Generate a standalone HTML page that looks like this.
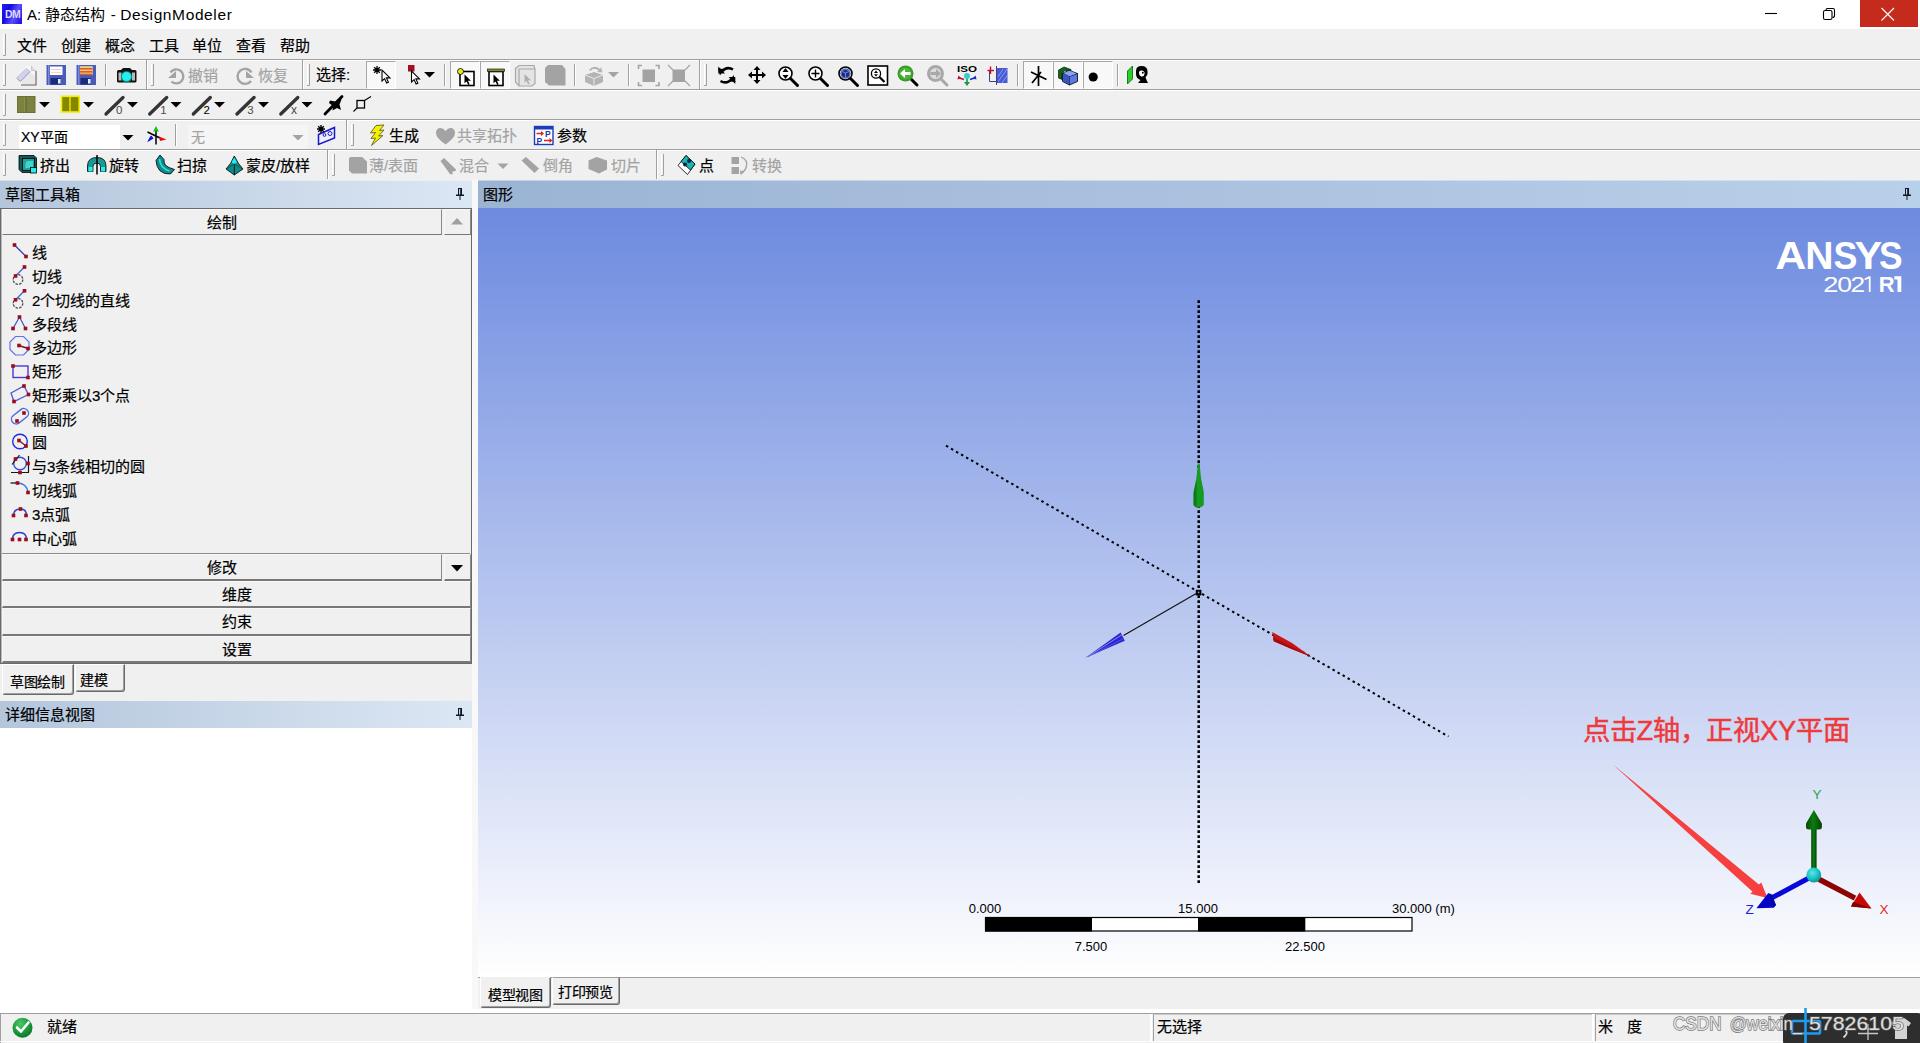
<!DOCTYPE html>
<html lang="zh-CN">
<head>
<meta charset="utf-8">
<title>A: 静态结构 - DesignModeler</title>
<style>
*{box-sizing:border-box;margin:0;padding:0}
html,body{width:1920px;height:1043px;overflow:hidden;background:#f0f0f0;font-family:"Liberation Sans",sans-serif;color:#000}
body{position:relative;font-size:15px;-webkit-text-stroke:.200px}
.a{position:absolute}
svg{position:absolute;overflow:visible}
/* title bar */
#title{left:0;top:0;width:1920px;height:29px;background:#fff}
#title .txt{-webkit-text-stroke:0;left:27px;top:5px;font-size:16px;line-height:20px;white-space:nowrap}
#close{left:1860px;top:0;width:58px;height:27px;background:#c42b1c}
/* menu + toolbars */
#bars{left:0;top:29px;width:1920px;height:152px;background:#f0f0f0}
.hl{left:0;width:1920px;height:2px;border-top:1px solid #a0a0a0;border-bottom:1px solid #fff}
.menu{top:37px;font-size:15px;line-height:18px;white-space:nowrap}
.grip{width:3px;border-left:1px solid #fff;border-right:1px solid #a0a0a0}
.vsep{width:2px;border-left:1px solid #a0a0a0;border-right:1px solid #fff}
.tb{font-size:15px;line-height:18px;white-space:nowrap}
.dis{color:#a3a3a3}
.pr{background:#f8f8f8;border-top:1px solid #a8a8a8;border-left:1px solid #a8a8a8;border-right:1px solid #fff;border-bottom:1px solid #fff}
/* left panel */
.phead{height:27px;background:linear-gradient(90deg,#b3c6dc,#dce7f4);font-size:15px;line-height:27px;padding-left:5px;white-space:nowrap}
.sec{left:2px;height:27px;background:#f0f0f0;border-top:1px solid #f8f8f8;border-left:1px solid #f8f8f8;border-right:1px solid #8a8a8a;border-bottom:2px solid #787878;text-align:center;font-size:15px;line-height:25.500px}
.li{left:32px;font-size:15px;line-height:18px;white-space:nowrap;transform:translateY(-.5px)}
.tab{background:#f0f0f0;font-size:14px;line-height:14px;white-space:nowrap;border-top:1px solid #fff;border-left:1px solid #fff;border-right:1px solid #6a6a6a;border-bottom:1px solid #6a6a6a;box-shadow:inset -1px -1px 0 #a0a0a0;border-radius:0 0 3px 3px}
/* viewport */
#view{left:478px;top:208px;width:1442px;height:769px;background:linear-gradient(180deg,#6c8adf 0%,#ffffff 100%)}
.sc{-webkit-text-stroke:0;font-size:13px;line-height:14px;white-space:nowrap}
/* status */
#status{left:0;top:1011px;width:1920px;height:32px;background:#f0f0f0}
</style>
</head>
<body>

<!-- ===== TITLE BAR ===== -->
<div id="title" class="a">
  <div class="a" style="left:2px;top:4px;width:20px;height:20px;background:linear-gradient(115deg,#2a1eea 0%,#140ae0 32%,#5c50fc 62%,#3426ec 82%,#1a0ee0 100%)"></div>
  <div class="a" style="left:3px;top:7px;width:19px;font-size:10.500px;line-height:14px;font-weight:bold;color:#dcdcff;letter-spacing:-.600px;-webkit-text-stroke:0;text-align:center">DM</div>
  <div class="a txt" style="font-size:15px">A: 静态结构<span style="display:inline-block;width:5.500px"></span>-<span style="display:inline-block;width:4.300px"></span><span style="font-size:15.500px;letter-spacing:.620px">DesignModeler</span></div>
  <div id="close" class="a"></div>
  <svg class="a" style="left:1740px;top:0" width="180" height="30" viewBox="1740 0 180 30">
    <path d="M1765 13.500H1777" stroke="#000" stroke-width="1.100"/>
    <rect x="1823.500" y="10.500" width="8.500" height="9" rx="1.600" fill="none" stroke="#000" stroke-width="1.100"/>
    <path d="M1826 10.500V10Q1826 8.500 1827.500 8.500H1833Q1834.500 8.500 1834.500 10V15.500Q1834.500 17.500 1832.500 17.500" fill="none" stroke="#000" stroke-width="1.100"/>
    <path d="M1881.500 8L1894 20.500M1894 8L1881.500 20.500" stroke="#fff" stroke-width="1.100"/>
  </svg>
</div>

<!-- ===== MENU + TOOLBARS ===== -->
<div id="bars" class="a"></div>
<div class="a menu" style="left:17px">文件</div>
<div class="a menu" style="left:61px">创建</div>
<div class="a menu" style="left:105px">概念</div>
<div class="a menu" style="left:149px">工具</div>
<div class="a menu" style="left:192px">单位</div>
<div class="a menu" style="left:236px">查看</div>
<div class="a menu" style="left:280px">帮助</div>
<div class="a hl" style="top:59px"></div>
<div class="a hl" style="top:89px"></div>
<div class="a hl" style="top:119px"></div>
<div class="a hl" style="top:149px"></div>

<!-- toolbar texts -->
<div class="a tb dis" style="left:188px;top:67px">撤销</div>
<div class="a tb dis" style="left:258px;top:67px">恢复</div>
<div class="a tb" style="left:316px;top:66px">选择:</div>
<div class="a" style="left:19px;top:125px;width:101px;height:24px;background:#fff"></div>
<div class="a tb" style="left:21px;top:128px;font-size:14px">XY平面</div>
<div class="a" style="left:188px;top:125px;width:120px;height:24px;background:#f5f5f5"></div>
<div class="a tb dis" style="left:191px;top:128px;font-size:14px">无</div>
<div class="a tb" style="left:389px;top:127px">生成</div>
<div class="a tb dis" style="left:457px;top:127px">共享拓扑</div>
<div class="a tb" style="left:557px;top:127px">参数</div>
<div class="a tb" style="left:40px;top:157px">挤出</div>
<div class="a tb" style="left:109px;top:157px">旋转</div>
<div class="a tb" style="left:177px;top:157px">扫掠</div>
<div class="a tb" style="left:246px;top:157px">蒙皮/放样</div>
<div class="a tb dis" style="left:369px;top:157px">薄/表面</div>
<div class="a tb dis" style="left:459px;top:157px">混合</div>
<div class="a tb dis" style="left:543px;top:157px">倒角</div>
<div class="a tb dis" style="left:611px;top:157px">切片</div>
<div class="a tb" style="left:699px;top:157px">点</div>
<div class="a tb dis" style="left:752px;top:157px">转换</div>

<!-- pressed (checked) toolbar buttons -->
<div class="a pr" style="left:366px;top:61px;width:30px;height:28px"></div>
<div class="a pr" style="left:450px;top:61px;width:30px;height:28px"></div>
<div class="a pr" style="left:480px;top:61px;width:30px;height:28px"></div>
<div class="a pr" style="left:1023px;top:61px;width:30px;height:28px"></div>
<div class="a pr" style="left:1053px;top:61px;width:30px;height:28px"></div>
<div class="a pr" style="left:1083px;top:61px;width:30px;height:28px"></div>

<!-- ICONS_SVG -->
<svg class="a" style="left:0;top:0" width="1920" height="181" viewBox="0 0 1920 181">
<defs>
  <g id="grip"><path d="M3.5 0V21.5" stroke="#fff" fill="none"/><path d="M5.5 0V21.5H3" stroke="#a0a0a0" fill="none"/></g>
  <g id="vs"><path d="M0.5 0V22" stroke="#a0a0a0"/><path d="M1.5 0V22" stroke="#fff"/></g>
  <g id="tend"><path d="M0.5 0V29" stroke="#a0a0a0"/><path d="M1.5 0V29" stroke="#fff"/></g>
  <path id="dd" d="M0 0H11L5.5 5.5Z"/>
  <g id="mag"><circle cx="8" cy="8" r="6.5" fill="#fff" stroke="#000" stroke-width="1.6"/><path d="M13 13L20 20" stroke="#000" stroke-width="3" stroke-linecap="round"/></g>
  <g id="cur"><path d="M0 0V11L2.6 8.6L4.6 13L6.4 12.2L4.4 7.9H8Z"/></g>
</defs>
<!-- grips -->
<use href="#grip" x="0" y="34"/>
<use href="#grip" x="0" y="64"/><use href="#grip" x="148" y="64"/><use href="#grip" x="304" y="64"/><use href="#grip" x="701" y="64"/>
<use href="#grip" x="0" y="94"/>
<use href="#grip" x="0" y="124"/><use href="#grip" x="348" y="124"/>
<use href="#grip" x="0" y="154"/><use href="#grip" x="329" y="154"/><use href="#grip" x="658" y="154"/>
<!-- toolbar ends -->
<use href="#tend" x="146" y="60"/><use href="#tend" x="302" y="60"/><use href="#tend" x="699" y="60"/>
<use href="#tend" x="346" y="120"/><use href="#tend" x="327" y="150"/><use href="#tend" x="656" y="150"/>
<!-- separators -->
<use href="#vs" x="105" y="64"/><use href="#vs" x="444" y="64"/><use href="#vs" x="574" y="64"/><use href="#vs" x="628" y="64"/><use href="#vs" x="1017" y="64"/><use href="#vs" x="1117" y="64"/>
<use href="#vs" x="175" y="124"/>

<!-- ROW 1 -->
<!-- new -->
<path d="M26 66H31.500L36 70.500V85H20.500V75Z" fill="#f6f6f6"/><path d="M31.500 66V70.500H36" fill="#dcdcdc" stroke="#b4b4b4" stroke-width=".6"/><path d="M21 85H36V71" stroke="#5c5c5c" stroke-width="1.100" fill="none"/><path d="M22 79L30 72L35 76V84H22Z" fill="#e2e2e2" opacity=".7"/>
<path d="M16.500 78L26.500 68.500L30 71.500L20.500 81.500Z" fill="#d2d2ee" stroke="#b0b0d4" stroke-width=".7"/><path d="M17.200 78.800L20.500 81.500L30 71.500" stroke="#a4a4c4" stroke-width="1" fill="none"/>
<!-- save -->
<g id="flop"><rect x="46.5" y="65" width="19.5" height="20" fill="#4a5cba"/><rect x="48" y="65" width="1.5" height="20" fill="#7c8ad8"/><rect x="50" y="66.5" width="12.5" height="8.5" fill="#fff"/><rect x="50.5" y="78" width="10.5" height="6.5" fill="#1c2c7c"/><rect x="58" y="79" width="2.6" height="4.6" fill="#e8ecff"/></g>
<use href="#flop" x="30"/><rect x="80" y="66.5" width="12.5" height="8.5" fill="#f4d060"/><rect x="80" y="68" width="12.5" height="1.6" fill="#e05a3a"/><rect x="80" y="71" width="12.5" height="1.6" fill="#e05a3a"/><rect x="80" y="73.6" width="12.5" height="1.4" fill="#e05a3a"/>
<rect x="51" y="69" width="10" height="1" fill="#f0c8c8"/><rect x="51" y="72" width="10" height="1" fill="#f0e0b0"/>
<!-- camera -->
<path d="M117 71.5Q117 70 118.5 70H121L123 68H130L132 70H135Q136.5 70 136.5 71.5V81Q136.5 82.5 135 82.5H118.5Q117 82.5 117 81Z" fill="#111"/>
<rect x="118.5" y="72.5" width="3" height="8" fill="#b8b8b8"/><rect x="132" y="72.5" width="3" height="8" fill="#b8b8b8"/>
<circle cx="126.5" cy="76.7" r="5.6" fill="#0a8a8a"/><circle cx="126.5" cy="76.5" r="4.6" fill="#22f0f0"/>
<!-- undo / redo (disabled) -->
<g fill="none" stroke="#a3a3a3" stroke-width="2.4"><path d="M170.5 72.5A7 7 0 1 1 171.5 81.5"/><path d="M251.5 72.5A7.5 7.5 0 1 0 251 81"/></g>
<path d="M168 78H176V71Z" fill="#a3a3a3"/><path d="M254 78H246V71Z" fill="#a3a3a3"/>
<!-- select: new selection (star + cursor) -->
<g stroke="#000" stroke-width="1.3"><path d="M373 70H381M377 66V74M374.2 67.2L379.8 72.8M379.8 67.2L374.2 72.8"/></g>
<use href="#cur" x="382" y="70" fill="#fff" stroke="#000" stroke-width="1.1"/>
<!-- select mode -->
<rect x="408" y="65" width="6.5" height="6.5" fill="#a01020"/>
<use href="#cur" x="411.5" y="71" fill="#fff" stroke="#000" stroke-width="1.1"/>
<use href="#dd" x="424" y="72"/>
<!-- point filter -->
<rect x="460" y="71.5" width="14" height="14" fill="#fff" stroke="#000" stroke-width="1.6"/><use href="#cur" transform="translate(464.500 74.500) scale(.8)"/><circle cx="460.5" cy="71.5" r="3" fill="#e8e820" stroke="#000" stroke-width=".8"/>
<!-- edge filter -->
<rect x="489" y="71.5" width="14" height="14" fill="#fff" stroke="#000" stroke-width="1.6"/><use href="#cur" transform="translate(493.500 74.500) scale(.8)"/><rect x="487.5" y="69" width="17" height="2.6" fill="#8a8a3a" stroke="#000" stroke-width=".6"/>
<!-- face filter (disabled) -->
<g stroke="#a8a8a8" fill="#e4e4e4" stroke-width="1.2"><path d="M515.5 68.5L519 65.5H534L535 69V83.5L532 86H519L515.5 82Z"/><path d="M519 69H535M519 69V86" fill="none"/></g><use href="#cur" transform="translate(524.500 74) scale(.8)" fill="#b0b0b0"/>
<!-- body filter (disabled) -->
<path d="M545 68L548 65H562L565.5 69V85.5H549L545 82Z" fill="#a3a3a3"/>
<!-- extend (disabled) -->
<g fill="#b4b4b4"><path d="M585 75L594 72L603 75V82L594 86L585 82Z"/><path d="M589 70Q594 64 600 69L601 67L602.5 72.5L597 72L598.5 70.5Q594 67 590.5 71Z"/></g><path d="M585 75L594 78.5L603 75M594 78.5V86" stroke="#e8e8e8" fill="none"/>
<use href="#dd" x="608" y="72" fill="#a3a3a3"/>
<!-- expand/shrink (disabled) -->
<g fill="#a3a3a3"><rect x="642.5" y="69.5" width="12.5" height="12.5"/><rect x="672.5" y="69.5" width="12.5" height="12.5"/></g>
<g stroke="#a3a3a3" stroke-width="1.6" fill="none"><path d="M638.5 69V65.5H642M655.5 65.5H659V69M659 82V85.5H655.5M642 85.5H638.5V82"/><path d="M668 65L673 70M690 65L685 70M690 86L685 81M668 86L673 81" stroke-width="1.2"/></g>
<!-- rotate -->
<g fill="none" stroke="#000" stroke-width="2.6"><path d="M721 72.5Q726.500 65.500 733 69.500"/><path d="M732.500 78Q727 85 720.500 81"/></g><path d="M718 68.500L724 69L720 75.500Z M735.500 82L729.500 81.500L733.500 75Z" fill="#000"/>
<path d="M718.300 66.500V73.500H725Z M735.300 84V77H728.600Z" fill="#000"/>
<!-- pan -->
<path d="M757 66L760.500 70H758V74H762V71.500L766 75L762 78.500V76H758V80H760.500L757 84L753.500 80H756V76H752V78.500L748 75L752 71.500V74H756V70H753.500Z" fill="#000"/>
<!-- zoom -->
<use href="#mag" x="777.500" y="65.500"/><path d="M785.500 68L788.500 72H782.500Z M785.500 79L788.500 75H782.500Z" fill="#000"/>
<!-- zoom + -->
<use href="#mag" x="807.500" y="65.500"/><path d="M811.500 73.500H819.500M815.500 69.500V77.500" stroke="#000" stroke-width="1.4"/>
<!-- zoom body -->
<use href="#mag" x="837.500" y="65.500"/><circle cx="845.500" cy="73.500" r="5.2" fill="#5a6ab0"/><path d="M842 71.500L845.500 70L849 71.500V76L845.500 77.500L842 76Z" fill="#1a2a8a"/><path d="M842 71.500L845.500 73L849 71.500M845.500 73V77.500" stroke="#9ab0ff" stroke-width=".7" fill="none"/>
<!-- box zoom -->
<rect x="868" y="66" width="19.500" height="19" fill="#fff" stroke="#000" stroke-width="1.6"/><circle cx="876" cy="73.500" r="4.600" fill="#fff" stroke="#000" stroke-width="1.300"/><path d="M879.500 77L884.500 82" stroke="#000" stroke-width="2.200"/><path d="M876 70.500L878 73H874ZM876 76.500L878 74.200H874Z"/>
<!-- prev view (green) -->
<g id="gm"><path d="M910 78L917 85" stroke="#000" stroke-width="3" stroke-linecap="round"/><circle cx="905.500" cy="73.500" r="8" fill="#3a9a2a"/><circle cx="905.500" cy="73.500" r="6" fill="#4cb43a"/><path d="M900 73.500L905 69V72H910.500V75H905V78Z" fill="#fff"/></g>
<!-- next view (disabled) -->
<path d="M940 78L947 85" stroke="#a8a8a8" stroke-width="3" stroke-linecap="round"/><circle cx="935.500" cy="73.500" r="7" fill="#dcdcdc" stroke="#a8a8a8" stroke-width="3"/><path d="M941 73.500L936 69V72H930.500V75H936V78Z" fill="#a8a8a8"/>
<!-- ISO -->
<text x="957" y="72" font-family="Liberation Sans, sans-serif" font-weight="bold" font-size="9.500" textLength="20" lengthAdjust="spacingAndGlyphs">ISO</text>
<path d="M967 76V84" stroke="#1a9a3a" stroke-width="1.600"/><path d="M964 82L967 86L970 82Z" fill="#1a9a3a"/><path d="M958 77.500L964 79.500" stroke="#c01030" stroke-width="1.600"/><path d="M957.500 79.500L958.500 75.500L961.500 78.500Z" fill="#c01030"/><path d="M976 77.500L970 79.500" stroke="#1030c0" stroke-width="1.600"/><path d="M976.500 79.500L975.500 75.500L972.500 78.500Z" fill="#1030c0"/><circle cx="967" cy="76" r="3" fill="#30d0d0"/>
<!-- section plane -->
<rect x="997" y="68" width="10.500" height="15" fill="#4a5ad0"/><path d="M998 82L1007 69M998 77L1003 69M1002 83L1007.500 75" stroke="#8a9aff" stroke-width="1"/><path d="M989.500 70V81.500H998M996.500 66V85" stroke="#404080" stroke-width="1" fill="none"/><path d="M987.500 70.500H994M990.500 66.500V74" stroke="#c01030" stroke-width="1.400"/>
<!-- display plane / axes -->
<path d="M1038.500 66V86M1031 72L1046.500 79.500M1032 83L1041 72" stroke="#000" stroke-width="1.700" fill="none"/>
<!-- model cubes -->
<path d="M1058.500 70L1064 67L1071 69.500V72L1065 70.500L1062 72.500V79.500L1058.500 78Z" fill="#0a6a1a" stroke="#000" stroke-width=".6"/>
<path d="M1062.500 73L1069.500 70.500L1077.500 73.500V81.500L1069.500 85L1062.500 81.500Z" fill="#5a7ae0" stroke="#000" stroke-width=".8"/><path d="M1062.500 73L1069.500 76.500L1077.500 73.500M1069.500 76.500V85" stroke="#000" stroke-width=".7" fill="none"/><path d="M1063 73.500L1069.500 76.800V84.500L1063 81.300Z" fill="#3a55c0"/><path d="M1063.500 73L1069.500 70.800L1076.500 73.500L1069.500 76.200Z" fill="#8aa4f4"/>
<!-- point display -->
<circle cx="1093.200" cy="77" r="4.600" fill="#000"/>
<!-- look at -->
<path d="M1127.500 71L1132.500 66V79L1127.500 84Z" fill="#2ad02a" stroke="#0a5a0a" stroke-width=".8"/>
<path d="M1136 71Q1136 66 1141.500 66Q1147.500 66 1147.500 71.500Q1148 75 1145.500 77L1146.500 80L1148 83H1138L1140.500 80Q1136 78.500 1136 74Z" fill="#000"/><path d="M1139 72.500Q1139 70 1142 70.500Q1145 71 1144.500 74Q1144 77 1141.500 76.500Q1139 76 1139 72.500Z" fill="#fff"/><circle cx="1142.800" cy="72.800" r="1" fill="#000"/>

<!-- ROW 2 -->
<rect x="17.500" y="96.500" width="17.500" height="16" fill="#7d8140" stroke="#6c7034" stroke-width="1"/><rect x="24.300" y="97" width="1.200" height="15" fill="#8e9252"/><rect x="25.500" y="97" width="1.200" height="15" fill="#666a2c"/>
<use href="#dd" x="39" y="102"/>
<rect x="61.500" y="96.300" width="17.700" height="15.700" fill="#868600" stroke="#f0f000" stroke-width="1.600"/><rect x="69.300" y="96.500" width="1.400" height="15.500" fill="#e8e800"/>
<use href="#dd" x="83" y="102"/>
<g id="ln"><path d="M106 114L123 97.500" stroke="#343434" stroke-width="3.300" stroke-linecap="round"/></g>
<use href="#ln" x="43.700"/><use href="#ln" x="87.300"/><use href="#ln" x="131"/><use href="#ln" x="174.800"/>
<g font-family="Liberation Sans, sans-serif" font-size="11.500" fill="#4a4a4a"><text x="116" y="113.600">0</text><text x="160.300" y="113.600">1</text><text x="203.600" y="113.600" fill="#000">2</text><text x="247.300" y="113.600">3</text><text x="291" y="113.600" font-size="12">x</text></g>
<use href="#dd" x="127" y="102"/><use href="#dd" x="170.500" y="102"/><use href="#dd" x="214" y="102"/><use href="#dd" x="258" y="102"/><use href="#dd" x="301.500" y="102"/>
<path d="M325 114L342 96.500" stroke="#000" stroke-width="2.800" stroke-linecap="round"/><path d="M330 100.500L335.500 101.500L340 98L341.500 99.500L339.500 104.500L341 110L337 108L332.500 110.500L333 106L329 103Z" fill="#000"/>
<rect x="357" y="100.500" width="7.500" height="7.500" fill="none" stroke="#000" stroke-width="1.300"/><path d="M353.500 111.500L357 108M364.500 100.500L371 96.500" stroke="#000" stroke-width="1.100"/>

<!-- ROW 3 -->
<use href="#dd" x="122.500" y="135"/>
<use href="#dd" x="292.500" y="135" fill="#a3a3a3"/>
<path d="M156 130V144.500M147.500 132L160 138" stroke="#000" stroke-width="1.500"/><path d="M156 126L158.800 131.500H153.200Z" fill="#10c010"/><path d="M153 137L147.500 141.800L150.500 136.200Z" fill="#1010e0"/><path d="M151 135.500L153.500 138.500L147.200 142.200Z" fill="#1010e0"/><path d="M159 136.500L166.500 139.500L160 141Z" fill="#e01010"/>
<path d="M318.500 134.500L334.500 127.500V138L318.500 144.500Z" fill="#eeeeff" stroke="#1818c8" stroke-width="1.500"/><circle cx="324.500" cy="135" r="1.400" fill="none" stroke="#1818c8"/><circle cx="330" cy="133.500" r="2" fill="none" stroke="#1818c8"/>
<g stroke="#000" stroke-width="1.400"><path d="M317 129H325M321 125V133M318.200 126.200L323.800 131.800M323.800 126.200L318.200 131.800"/></g>
<path d="M376 125.500L384 125L379.500 130.500L384 130L378.500 136L383 135.500L371.500 145.500L375.500 138L371 138.500L375.500 132.500L370.500 133Z" fill="#f8f000" stroke="#50500a" stroke-width=".8"/>
<path d="M445.500 131Q443 127.500 439.500 128Q436 129 436 133Q436 138 445.500 144.500Q455 138 455 133Q455 129 451.500 128Q448 127.500 445.500 131Z" fill="#a3a3a3"/>
<rect x="534.500" y="126.500" width="18.500" height="18" fill="#fff" stroke="#1c3cb8" stroke-width="1.400"/><rect x="534.500" y="126.500" width="18.500" height="3" fill="#1c3cb8"/>
<g font-family="Liberation Sans, sans-serif" font-weight="bold" font-size="8.500" fill="#1c3cb8"><text x="545" y="137">P</text><text x="536.500" y="143.800">P</text></g>
<path d="M536.500 133.500H542M544 140.500H550.500" stroke="#e02020" stroke-width="1.300"/><path d="M541 131L544 133.500L541 136ZM549.500 138L552.500 140.500L549.500 143Z" fill="#e02020"/>

<!-- ROW 4 -->
<path d="M19 155.500H34L36.500 158V168H31V172.500H22L19 169.500Z" fill="#0c5c5c" stroke="#000" stroke-width=".8"/><rect x="22.500" y="158.500" width="12" height="12" fill="#2a9c94" stroke="#000" stroke-width=".8"/><path d="M25.500 164Q25.500 161 28.500 161H33V168H25.500Z" fill="#38d8d0"/><rect x="30.500" y="167.500" width="6" height="5.500" fill="#20f0f0" stroke="#000" stroke-width=".8"/>
<path d="M87.500 171.500V166Q87.500 157.500 97 157.500Q106 157.500 106 166V171.500H100.500V166.500Q100.500 163 97 163Q93 163 93 166.500V171.500Z" fill="#1a9a94" stroke="#000" stroke-width=".8"/><rect x="88.500" y="167" width="4" height="4.500" fill="#20f0f0"/><rect x="101" y="167" width="4" height="4.500" fill="#20f0f0"/><path d="M97 155V174.500" stroke="#000" stroke-width="1.500"/>
<path d="M160 155L164 159.500Q163.500 165 169 167.500L174.500 169.500L170.500 174Q157 174.500 156 160.500Z" fill="#148a88" stroke="#000" stroke-width=".8"/><path d="M159.500 159Q160 168 169.500 171" stroke="#20e8e8" stroke-width="1.600" fill="none"/>
<path d="M234.300 156L238.500 163.500L243 169L234.300 175L226 169L230.500 163.500Z" fill="#148a88" stroke="#000" stroke-width=".8"/><path d="M234.300 157.500L237 162.500L234.300 164L231.500 162.500Z" fill="#20f0f0"/><path d="M234.300 164V175" stroke="#000" stroke-width=".8"/><path d="M226.500 169L234.300 164L242.500 169" stroke="#0a5050" stroke-width=".8" fill="none"/>
<g fill="#a3a3a3">
<path d="M349 159Q349 157 351 157H362L367 161.500V173.500H352L349 170.500Z"/>
<path d="M440.500 161L444 158L456 169.500L455.500 171L452.500 171.500V174.500L450 174Z"/>
<path d="M521.500 160.500L526 157L539 168.500L534.500 173Z"/>
<path d="M588.500 160.500L596.500 157L607 160.500V169.500L599 173.500L588.500 169Z"/>
<rect x="731.500" y="157" width="7.500" height="7"/><rect x="731.500" y="167" width="7.500" height="7"/>
</g>
<use href="#dd" x="497.500" y="163.500" fill="#a3a3a3"/>
<path d="M741 157Q748 160 746.500 166Q745.500 171 741.500 172.500" stroke="#a3a3a3" stroke-width="1.300" fill="none"/><path d="M740 170L744 172.500L740.500 175Z" fill="#a3a3a3"/>
<path d="M686 155.500L695 164L687.500 174.500L678 165.500Z" fill="#fff" stroke="#000" stroke-width=".8"/><path d="M686 155.500L695 164L690.500 170L681 161.500Z" fill="#18b8b0" stroke="#000" stroke-width=".8"/><circle cx="685" cy="164.500" r="1.700" fill="#102080" stroke="#000" stroke-width=".5"/><circle cx="689" cy="161" r="1.700" fill="#102080" stroke="#000" stroke-width=".5"/>
</svg>
<!-- ===== LEFT PANEL ===== -->
<div class="a" style="left:472px;top:180px;width:6px;height:831px;background:#f8f8f8"></div>
<div class="a phead" style="left:0;top:180px;width:472px;height:28px;line-height:29px;box-shadow:inset 0 1px 0 rgba(255,255,255,.45)">草图工具箱</div>
<div class="a" style="left:0;top:208px;width:472px;height:456px;background:#f0f0f0;border:1px solid #6a6a6a;box-shadow:inset 1px 0 0 #b8b8b8"></div>
<div class="a sec" style="top:209px;width:440px;height:26px;border-bottom:1px solid #787878">绘制</div>
<div class="a sec" style="top:209px;left:444px;width:27px;height:26px;border-bottom:1px solid #787878"></div>
<div class="a li" style="top:244px">线</div>
<div class="a li" style="top:268px">切线</div>
<div class="a li" style="top:292px">2个切线的直线</div>
<div class="a li" style="top:316px">多段线</div>
<div class="a li" style="top:339px">多边形</div>
<div class="a li" style="top:363px">矩形</div>
<div class="a li" style="top:387px">矩形乘以3个点</div>
<div class="a li" style="top:411px">椭圆形</div>
<div class="a li" style="top:434px">圆</div>
<div class="a li" style="top:458px">与3条线相切的圆</div>
<div class="a li" style="top:482px">切线弧</div>
<div class="a li" style="top:506px">3点弧</div>
<div class="a li" style="top:530px">中心弧</div>

<div class="a" style="left:2px;top:553px;width:468px;height:1px;background:#8c8c8c"></div>
<div class="a sec" style="top:554px;width:440px">修改</div>
<div class="a sec" style="top:554px;left:444px;width:27px"></div>
<div class="a sec" style="top:581px;width:469px">维度</div>
<div class="a sec" style="top:608px;width:469px;height:28px">约束</div>
<div class="a sec" style="top:636px;width:469px">设置</div>

<!-- bottom tabs -->
<div class="a tab" style="left:75px;top:664px;width:50px;height:28px;padding:8px 0 0 4px">建模</div>
<div class="a tab" style="left:2px;top:664px;width:72px;height:31px;padding:10px 0 0 7px;letter-spacing:-.300px">草图绘制</div>

<div class="a phead" style="left:0;top:701px;width:472px">详细信息视图</div>
<div class="a" style="left:0;top:728px;width:472px;height:283px;background:#fff"></div>

<svg class="a" style="left:0;top:181px" width="478" height="560" viewBox="0 181 478 560">
<defs><rect id="rs" x="-.3" y="-.3" width="3.600" height="3.600" fill="#9c0c1c"/>
<g id="pin"><path d="M2.500 0H6.500V6.500H8.500V8H5V12H4V8H0.500V6.500H2.500Z" fill="#101828"/><rect x="3.500" y="1" width="1.200" height="5.500" fill="#c8d4e4"/></g></defs>
<use href="#pin" x="455.500" y="188"/><use href="#pin" x="455.500" y="708"/>
<path d="M451 224.500H463L457 218Z" fill="#a0a0a0"/>
<path d="M451 565H463L457 571.500Z" fill="#000"/>
<!-- 线 -->
<path d="M14.500 245L26 256.500" stroke="#3c3cb4" stroke-width="1.300"/><use href="#rs" x="13" y="243.500"/><use href="#rs" x="24.500" y="255"/>
<!-- 切线 -->
<g id="tan"><circle cx="18" cy="279.500" r="4.800" fill="none" stroke="#505058" stroke-width="1.300" stroke-dasharray="2.500 1.200"/><path d="M15.500 276L24.500 267" stroke="#4a6ad8" stroke-width="1.400"/><use href="#rs" x="23" y="265.500"/><use href="#rs" x="14" y="274.500"/></g>
<use href="#tan" y="23.800"/>
<!-- 多段线 -->
<path d="M13 328.500L19.500 317L25.500 328.500" stroke="#3c5cd0" stroke-width="1.300" fill="none"/><use href="#rs" x="18" y="315.500"/><use href="#rs" x="11.500" y="327"/><use href="#rs" x="24" y="327"/>
<!-- 多边形 -->
<path d="M15.500 336.500H23.500L29 342V349.500L23.500 355H15.500L10 349.500V342Z" fill="none" stroke="#6272e4" stroke-width="1.200"/><path d="M19 345.500L28 348.500" stroke="#7a1020" stroke-width="1.400"/><use href="#rs" x="17.500" y="344"/><use href="#rs" x="26.500" y="347"/>
<!-- 矩形 -->
<rect x="13" y="366" width="15" height="11.500" fill="none" stroke="#4a3ad0" stroke-width="1.400"/><use href="#rs" x="11.500" y="364.500"/><use href="#rs" x="26.500" y="376"/>
<!-- 矩形3点 -->
<path d="M11 393L24 386L28.500 394.500L14 401.500Z" fill="none" stroke="#4a5ad8" stroke-width="1.300"/><use href="#rs" x="22.500" y="384.500"/><use href="#rs" x="27" y="393"/><use href="#rs" x="12.500" y="400"/>
<!-- 椭圆形 -->
<rect x="10.500" y="411.500" width="19" height="9.500" rx="4.750" fill="none" stroke="#4a6ae0" stroke-width="1.400" transform="rotate(-38 20 416.250)"/><use href="#rs" x="22.500" y="411.500"/><use href="#rs" x="15.500" y="419.500"/>
<!-- 圆 -->
<circle cx="20" cy="441.500" r="7.300" fill="none" stroke="#1c2ce0" stroke-width="1.400"/><path d="M19 440.500L26 446" stroke="#7a1020" stroke-width="1.300"/><use href="#rs" x="17.500" y="439"/><use href="#rs" x="24.500" y="444.500"/>
<!-- 3切圆 -->
<circle cx="20" cy="463.500" r="6.300" fill="none" stroke="#2c4ce0" stroke-width="1.400"/><path d="M11 472.500H29M28.500 456V472.500M12 464.500L19.500 455" stroke="#181818" stroke-width="1.200" fill="none"/><use href="#rs" x="14" y="457.500"/><use href="#rs" x="26.500" y="462"/><use href="#rs" x="18.500" y="471"/>
<!-- 切线弧 -->
<path d="M10.500 483H18" stroke="#181818" stroke-width="1.300"/><path d="M18 483Q26.500 483.500 28 492" stroke="#3c7cd8" stroke-width="1.400" fill="none"/><use href="#rs" x="16" y="481.500"/><use href="#rs" x="26.500" y="491"/>
<!-- 3点弧 -->
<path d="M13.500 515.500Q13.500 509 20.500 509Q26.500 509 26.500 515.500" stroke="#2c3cd0" stroke-width="1.500" fill="none"/><use href="#rs" x="12" y="514"/><use href="#rs" x="19" y="507.500"/><use href="#rs" x="24.500" y="514"/>
<!-- 中心弧 -->
<path d="M12.500 539.500Q12.500 532.500 19.500 532.500Q26.500 532.500 26.500 539.500" stroke="#2c3cd0" stroke-width="1.500" fill="none"/><use href="#rs" x="11" y="538"/><use href="#rs" x="18" y="538"/><use href="#rs" x="24.500" y="538"/>
</svg>

<!-- ===== VIEWPORT ===== -->
<div class="a phead" style="left:478px;top:180px;width:1442px;height:28px;line-height:29px;box-shadow:inset 0 1px 0 rgba(255,255,255,.4);background:linear-gradient(90deg,#9cb4d4,#b9d0ea)">图形</div>
<div id="view" class="a"></div>

<!-- scale bar labels -->
<div class="a sc" style="left:945px;top:902px;width:80px;text-align:center">0.000</div>
<div class="a sc" style="left:1158px;top:902px;width:80px;text-align:center">15.000</div>
<div class="a sc" style="left:1392px;top:902px">30.000 (m)</div>
<div class="a sc" style="left:1051px;top:940px;width:80px;text-align:center">7.500</div>
<div class="a sc" style="left:1265px;top:940px;width:80px;text-align:center">22.500</div>

<!-- annotation -->
<div class="a" style="left:1583px;top:715.300px;font-size:27.300px;line-height:32px;color:#ee3a3a;white-space:nowrap;letter-spacing:-.250px;-webkit-text-stroke:.450px #ee3a3a">点击Z轴，正视XY平面</div>

<svg class="a" style="left:478px;top:180px" width="1442" height="797" viewBox="478 180 1442 797">
<defs>
<linearGradient id="gY" x1="0" x2="1"><stop offset="0" stop-color="#064a06"/><stop offset=".45" stop-color="#0c7c10"/><stop offset="1" stop-color="#054205"/></linearGradient>
<radialGradient id="gS" cx=".4" cy=".35" r=".7"><stop offset="0" stop-color="#58e8e8"/><stop offset=".6" stop-color="#18c0c0"/><stop offset="1" stop-color="#0a8c94"/></radialGradient>
</defs>
<!-- ANSYS logo -->
<g font-family="Liberation Sans, sans-serif" font-size="100" fill="#fff"><text transform="translate(1775.13 268.900) scale(0.4293 0.3924)" font-weight="bold">A</text><text transform="translate(1805.28 268.900) scale(0.3912 0.3924)" font-weight="bold">N</text><text transform="translate(1833.47 268.900) scale(0.3589 0.3924)" font-weight="bold">S</text><text transform="translate(1854.59 268.900) scale(0.4150 0.3924)" font-weight="bold">Y</text><text transform="translate(1879.08 268.900) scale(0.3539 0.3924)" font-weight="bold">S</text><text transform="translate(1823.33 291.900) scale(0.2722 0.2282)">2</text><text transform="translate(1837.16 291.900) scale(0.2657 0.2282)">0</text><text transform="translate(1850.38 291.900) scale(0.2634 0.2282)">2</text><text transform="translate(1878.64 291.900) scale(0.2190 0.2282)" font-weight="bold">R</text></g>
<path d="M1864.300 278.700L1868.900 276.200H1870.600V291.900H1868.800V278.400L1865 280.300Z M1894.300 276.200H1901.300V291.900H1897.500V279.600H1894.300Z" fill="#fff"/>
<use href="#pin" x="1902.500" y="188"/>
<!-- dotted axes -->
<path d="M1198.700 300.300V883" stroke="#000" stroke-width="2.500" stroke-dasharray="2.600 2.400" fill="none"/>
<path d="M946 445.700L1448.500 736.500" stroke="#000" stroke-width="2" stroke-dasharray="2.500 3.300" fill="none"/>
<path d="M1198 592.500L1123.500 635.500" stroke="#101010" stroke-width="1.100"/>
<rect x="1195.800" y="589.800" width="5.600" height="5.600" fill="#000"/><rect x="1197.800" y="591.600" width="1.600" height="1.600" fill="#8a9ac8"/>
<!-- green arrow (Y) -->
<path d="M1198 463.500H1199.600L1201 478L1203.800 492V505Q1198.800 510.500 1193.600 505V492L1196.400 478Z" fill="#169a22"/><path d="M1193.600 493V505Q1195 507 1196.500 507.700V480Z" fill="#0c7a18"/>
<!-- blue arrow (Z) -->
<path d="M1120.600 632.400L1124.800 640.800L1085.500 657.700Z" fill="#2828d0"/><path d="M1121.800 634.800L1088 656.500" stroke="#8a8af4" stroke-width="1"/><path d="M1123.800 638.500L1088 656.800" stroke="#5a5ae8" stroke-width=".8"/>
<!-- red arrow (X) -->
<path d="M1272.200 632L1273.800 641.200L1290 648.500L1311.500 657L1292 643Z" fill="#c81414"/><path d="M1273.800 641.200L1311.500 657L1273 637.500Z" fill="#a00c0c"/>

<!-- scale bar -->
<rect x="985.500" y="917.500" width="426.500" height="13.500" fill="#fff" stroke="#000" stroke-width="1.200"/>
<rect x="985" y="917" width="107" height="14.500" fill="#000"/><rect x="1198" y="917" width="107.300" height="14.500" fill="#000"/>

<!-- annotation arrow -->
<path d="M1612.600 764.200L1758.900 884.600L1761.300 882.600L1767.500 897.900L1750.200 893.700L1752.600 891.700Z" fill="#f64040"/>

<!-- triad -->
<path d="M1808 878.500L1772 897.800" stroke="#0808d8" stroke-width="5"/>
<path d="M1756.400 908.300L1768.300 892.900L1776 905L1773.500 907.800Z" fill="#0404c8"/><path d="M1768.300 892.900L1772 894.500L1776 905L1773.500 907.800Z" fill="#0606a8"/>
<path d="M1818.500 879L1855 898.200" stroke="#8c0404" stroke-width="5.400"/>
<path d="M1859.500 892.500L1851 906.500L1871.500 908.500Z" fill="#c80808"/><path d="M1851 906.500L1871.500 908.500L1853 902Z" fill="#7c0404"/>
<rect x="1811.200" y="828" width="5.400" height="44" fill="url(#gY)"/>
<path d="M1813.900 810L1821.900 823.500V827Q1821.900 829.500 1819 829.500H1808.800Q1806 829.500 1806 827V823.500Z" fill="url(#gY)"/>
<circle cx="1813.800" cy="875" r="7.400" fill="url(#gS)"/>
<g font-family="Liberation Sans, sans-serif" font-size="13.500"><text x="1812.500" y="799" fill="#22a848">Y</text><text x="1879.500" y="914" fill="#e02828">X</text><text x="1745.500" y="914" fill="#2020e0">Z</text></g>
</svg>

<!-- viewport bottom tabs -->
<div class="a" style="left:478px;top:977px;width:1442px;height:34px;background:#f0f0f0;border-top:1px solid #a0a0a0"></div>
<div class="a tab" style="left:552px;top:977px;width:68px;height:28px;padding:7px 0 0 5px;letter-spacing:-.300px;border-top-color:#a0a0a0">打印预览</div>
<div class="a tab" style="left:480px;top:977px;width:71px;height:31px;padding:10px 0 0 7px;letter-spacing:-.300px;border-top-color:#f0f0f0">模型视图</div>

<!-- ===== STATUS BAR ===== -->
<div class="a" style="left:0;top:1009px;width:1920px;height:4px;background:#fff"></div>
<div id="status" class="a" style="top:1013px;height:30px;border-top:1px solid #a0a0a0;border-left:1px solid #a0a0a0"></div>
<div class="a" style="left:0;top:1041px;width:1920px;height:1px;background:#fff"></div>
<div class="a tb" style="left:47px;top:1018px">就绪</div>
<div class="a" style="left:1150px;top:1014px;width:2px;height:27px;background:#fff"></div>
<div class="a" style="left:1153px;top:1014px;width:439px;height:27px;border-left:1px solid #a0a0a0;border-top:1px solid #c8c8c8"></div>
<div class="a tb" style="left:1157px;top:1018px">无选择</div>
<div class="a" style="left:1592px;top:1014px;width:2px;height:27px;background:#fff"></div>
<div class="a" style="left:1595px;top:1014px;width:325px;height:27px;border-left:1px solid #a0a0a0;border-top:1px solid #c8c8c8"></div>
<div class="a tb" style="left:1598px;top:1018px">米<span style="display:inline-block;width:14px"></span>度</div>
<!-- IME overlay -->
<div class="a" style="left:1783px;top:1013px;width:140px;height:34px;background:#2e2e2e;border-radius:6px"></div>
<svg class="a" style="left:0;top:1005px" width="1920" height="38" viewBox="0 1005 1920 38">
<defs><radialGradient id="gC" cx=".4" cy=".3" r=".8"><stop offset="0" stop-color="#4cc86c"/><stop offset=".55" stop-color="#189a3c"/><stop offset="1" stop-color="#0c6a24"/></radialGradient></defs>
<circle cx="22.500" cy="1027.700" r="10" fill="url(#gC)"/><path d="M17 1027.500L21 1031.500L28.500 1022.500" stroke="#fff" stroke-width="2.600" fill="none" stroke-linecap="round" stroke-linejoin="round"/>
<path d="M1805.500 1008V1043" stroke="#1e9cf0" stroke-width="2.600"/><rect x="1792" y="1021" width="28" height="12.500" fill="none" stroke="#1e9cf0" stroke-width="2.600" rx="1"/>
<path d="M1845.500 1030.500Q1848 1032.500 1845.500 1035.500L1843.500 1037.500" stroke="#d8d8d8" stroke-width="1.800" fill="none"/>
<path d="M1858 1033.500H1878M1868 1024V1040M1861.500 1029H1874.500" stroke="#c8c8c8" stroke-width="1.300" fill="none"/>
<path d="M1897 1018.500L1899.500 1017.500Q1901 1019.500 1902.500 1017.500L1905 1018.500L1911 1023L1908.500 1026.500L1907 1025.500V1039H1895V1025.500L1893.500 1026.500L1891 1023Z" fill="#d4d4d4"/>
</svg>
<svg class="a" style="left:1660px;top:1005px" width="260" height="38" viewBox="1660 1005 260 38"><g font-family="Liberation Sans, sans-serif" font-size="19" fill="#ececec" fill-opacity=".93" stroke="#5a5a5a" stroke-opacity=".8" stroke-width="1.500" paint-order="stroke" lengthAdjust="spacingAndGlyphs"><text x="1673" y="1030.300" textLength="48.500" lengthAdjust="spacingAndGlyphs">CSDN</text><text x="1729.700" y="1030.300" textLength="72.300" lengthAdjust="spacingAndGlyphs">@weixin_</text><text x="1809" y="1030.300" textLength="95" lengthAdjust="spacingAndGlyphs">57826105</text></g></svg>

</body>
</html>
